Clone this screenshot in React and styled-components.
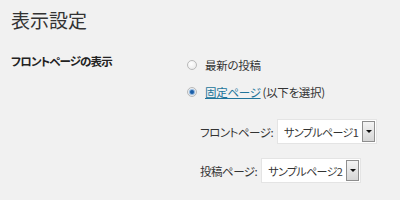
import React from 'react';
import styled, { createGlobalStyle } from 'styled-components';

const GlobalStyle = createGlobalStyle`
  html, body {
    margin: 0;
    padding: 0;
    background: #f1f1f1;
  }
  body {
    font-family: "Noto Sans CJK JP", "Liberation Sans", sans-serif;
    font-feature-settings: "palt";
    color: #333;
  }
`;

const Page = styled.div`
  width: 400px;
  height: 200px;
  padding: 8px 0 0 11px;
  box-sizing: border-box;
  overflow: hidden;
`;

const Title = styled.h2`
  margin: 0;
  font-size: 19px;
  line-height: 24px;
  font-weight: 400;
  color: #333;
`;

const FormTable = styled.div`
  display: grid;
  grid-template-columns: 176px 1fr;
  margin-top: 16px;
`;

const RowLabel = styled.div`
  font-size: 11.5px;
  line-height: 18px;
  font-weight: 700;
  letter-spacing: -0.9px;
  color: #222;
  padding-top: 4px;
`;

const Options = styled.div`
  display: flex;
  flex-direction: column;
  padding-top: 3px;
`;

const RadioRow = styled.label`
  display: flex;
  align-items: center;
  gap: 8px;
  height: 27px;
  font-size: 11.5px;
  letter-spacing: -0.3px;
  color: #333;
  white-space: nowrap;
`;

const Radio = styled.span`
  width: 10px;
  height: 10px;
  border-radius: 50%;
  box-sizing: border-box;
  border: 1px solid #b9b9b9;
  background: radial-gradient(circle at 40% 35%, #fff 0%, #e6e6e6 100%);
  display: flex;
  align-items: center;
  justify-content: center;

  &::after {
    content: '';
    width: 4px;
    height: 4px;
    border-radius: 50%;
    background: ${(p) => (p.$checked ? '#1a5ea8' : 'transparent')};
    box-shadow: ${(p) => (p.$checked ? '0 0 1px 1px rgba(60,130,200,0.6)' : 'none')};
  }
`;

const Link = styled.a`
  color: #21759b;
  text-decoration: underline;
  margin-right: 2px;
`;

const SelectList = styled.div`
  display: flex;
  flex-direction: column;
  gap: 14px;
  padding: 14px 0 0 13px;
`;

const SelectRow = styled.div`
  display: flex;
  align-items: center;
  gap: 4px;
  font-size: 11.5px;
  letter-spacing: -0.5px;
  color: #333;
  white-space: nowrap;
`;

const Select = styled.div`
  display: flex;
  align-items: center;
  justify-content: space-between;
  width: 100px;
  height: 25px;
  box-sizing: border-box;
  background: #fff;
  border: 1px solid #e4e4e4;
  padding: 0 1px 0 6px;
  font-size: 11px;
  letter-spacing: -0.6px;
  color: #333;
  white-space: nowrap;
`;

const Arrow = styled.span`
  width: 13px;
  height: 21px;
  box-sizing: border-box;
  border: 1px solid #8e8e8e;
  background: linear-gradient(#f4f4f4, #d6d6d6);
  display: flex;
  align-items: center;
  justify-content: center;
  flex-shrink: 0;

  &::after {
    content: '';
    border-left: 3px solid transparent;
    border-right: 3px solid transparent;
    border-top: 3px solid #111;
  }
`;

export default function App() {
  return (
    <>
      <GlobalStyle />
      <Page>
        <Title>表示設定</Title>
        <FormTable>
          <RowLabel>フロントページの表示</RowLabel>
          <Options>
            <RadioRow>
              <Radio />
              最新の投稿
            </RadioRow>
            <RadioRow>
              <Radio $checked />
              <span>
                <Link href="#">固定ページ</Link>(以下を選択)
              </span>
            </RadioRow>
            <SelectList>
              <SelectRow>
                フロントページ:
                <Select>
                  サンプルページ1
                  <Arrow />
                </Select>
              </SelectRow>
              <SelectRow>
                投稿ページ:
                <Select>
                  サンプルページ2
                  <Arrow />
                </Select>
              </SelectRow>
            </SelectList>
          </Options>
        </FormTable>
      </Page>
    </>
  );
}
